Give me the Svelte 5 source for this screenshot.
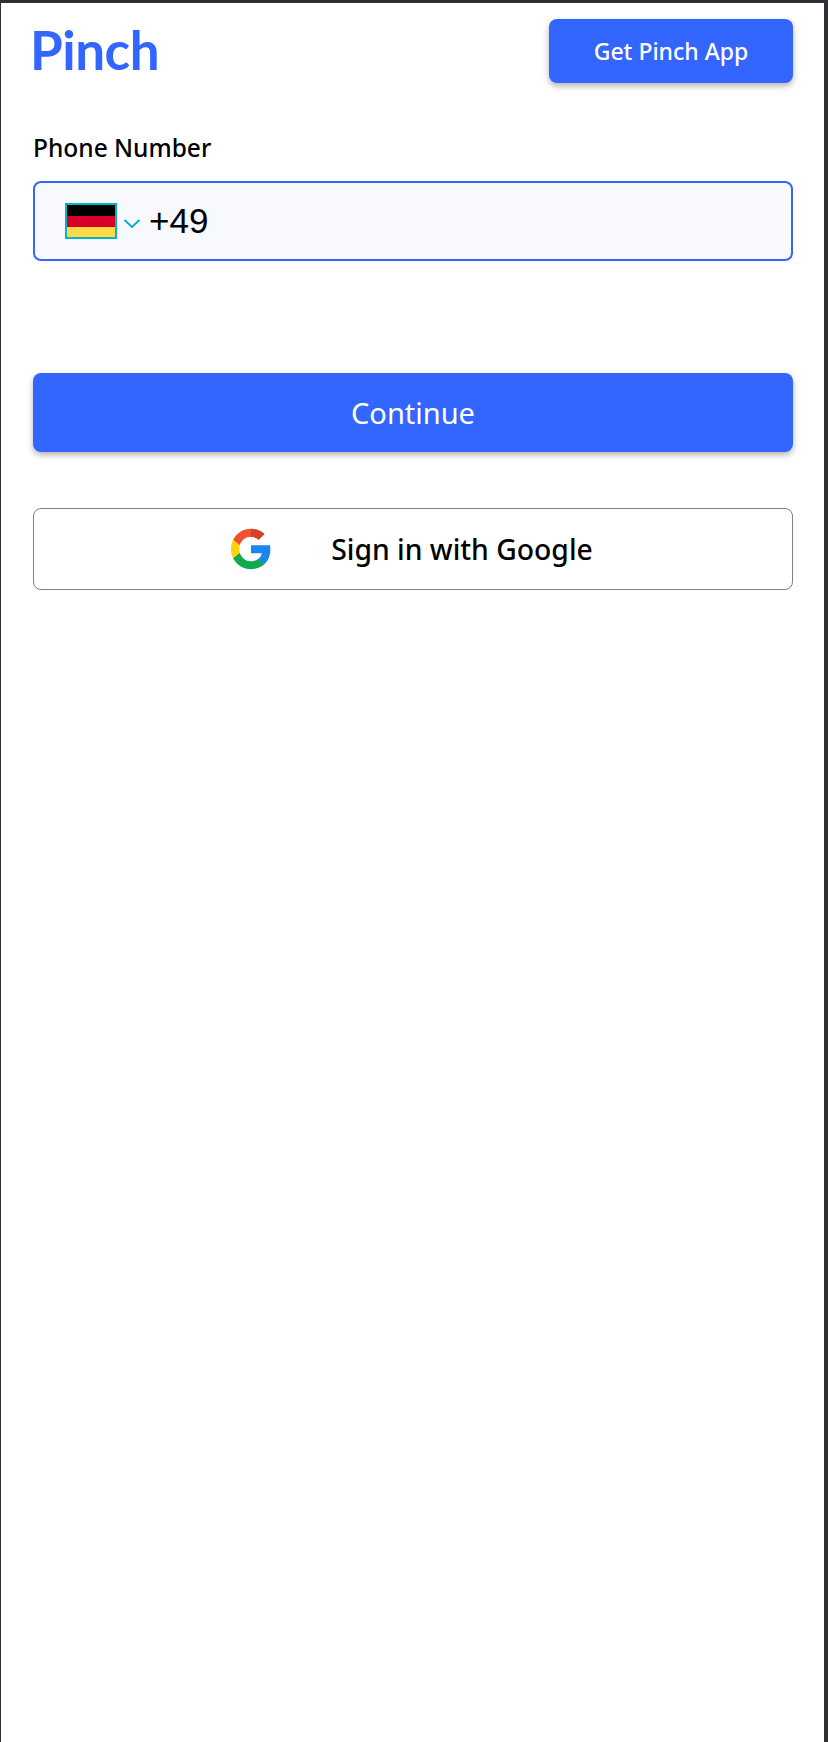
<script>
  let phone = $state("+49");
</script>

<div class="frame">
  <header class="top">
    <span class="logo">Pinch</span>
    <button class="btn app">Get Pinch App</button>
  </header>

  <main class="form">
    <label class="label" for="phone">Phone Number</label>
    <div class="phone-box">
      <svg class="flag" viewBox="0 0 52 36" width="52" height="36">
        <rect width="52" height="36" fill="#00b4d0" />
        <rect x="2" y="2" width="48" height="11" fill="#000" />
        <rect x="2" y="13" width="48" height="11" fill="#d80027" />
        <rect x="2" y="24" width="48" height="10" fill="#ffda44" />
      </svg>
      <svg class="chev" viewBox="0 0 18 12" width="18" height="12">
        <path d="M1.5 3 L9 10 L16.500 3" fill="none" stroke="#00b4d0" stroke-width="2" />
      </svg>
      <input id="phone" class="phone" bind:value={phone} />
    </div>

    <button class="btn continue">Continue</button>

    <button class="google">
      <svg class="g" viewBox="0 0 48 48" width="44" height="44">
        <path fill="#1a87f0" d="M45.1 24.5c0-1.6-.1-3.1-.4-4.5H24v8.5h11.8c-.5 2.800-2 5.100-4.400 6.700v5.500h7.100c4.200-3.800 6.600-9.500 6.600-16.200z" />
        <path fill="#12a84e" d="M24 46c5.900 0 10.900-2 14.500-5.300l-7.100-5.500c-2 1.300-4.500 2.100-7.400 2.100-5.700 0-10.500-3.800-12.200-9H4.500v5.700C8.100 41 15.500 46 24 46z" />
        <path fill="#ffd30a" d="M11.800 28.300c-.4-1.300-.7-2.800-.7-4.300s.3-3 .7-4.300V14H4.500C3 17 2.100 20.400 2.100 24s.9 7 2.400 10l7.300-5.700z" />
        <path fill="#f2502c" d="M24 10.700c3.200 0 6.100 1.100 8.400 3.300l6.300-6.300C34.900 4.200 29.900 2 24 2 15.500 2 8.100 7 4.500 14l7.300 5.700c1.700-5.200 6.500-9 12.200-9z" />
        <path fill="#d0422a" d="M24 2v8.700c3.200 0 6.100 1.100 8.400 3.300l6.300-6.300C34.900 4.200 29.900 2 24 2z" />
      </svg>
      <span>Sign in with Google</span>
    </button>
  </main>
</div>

<style>
  :global(body) {
    margin: 0;
    background: #fff;
  }

  .frame {
    box-sizing: border-box;
    width: 828px;
    height: 1742px;
    border-top: 3px solid #2f3034;
    border-left: 1px solid #2f3034;
    border-right: 4px solid #2f3034;
    background: #fff;
    font-family: "Noto Sans", "Open Sans", sans-serif;
    overflow: hidden;
  }

  .top {
    display: flex;
    justify-content: space-between;
    align-items: flex-start;
    padding: 16px 31px 0 32px;
  }

  .logo {
    font-family: Lato, sans-serif;
    font-weight: 700;
    font-size: 53px;
    line-height: 62px;
    color: #3366ff;
    letter-spacing: -0.5px;
    margin-left: -3px;
  }

  .btn {
    border: none;
    border-radius: 8px;
    background: #3366ff;
    color: #fff;
    font-family: inherit;
    box-shadow: 0 3px 6px rgba(0, 0, 0, 0.3);
    padding: 0;
  }

  .app {
    width: 244px;
    height: 64px;
    font-size: 23px;
    font-weight: 500;
  }

  .form {
    display: flex;
    flex-direction: column;
    padding: 0 31px 0 32px;
    margin-top: 49px;
  }

  .label {
    font-size: 24.5px;
    font-weight: 500;
    line-height: 32px;
    color: #000;
    margin-bottom: 17px;
  }

  .phone-box {
    box-sizing: border-box;
    display: flex;
    align-items: center;
    height: 80px;
    border: 2px solid #3366ff;
    border-radius: 8px;
    background: #f7f9fc;
    padding-left: 30px;
  }

  .flag {
    flex: none;
  }

  .chev {
    flex: none;
    margin-left: 6px;
    margin-top: 4px;
  }

  .phone {
    flex: 1;
    min-width: 0;
    border: none;
    outline: none;
    background: transparent;
    padding: 0;
    margin-left: 8px;
    font-family: "Liberation Sans", Arial, sans-serif;
    font-size: 35px;
    color: #000;
  }

  .continue {
    height: 79px;
    margin-top: 112px;
    font-size: 29px;
    font-weight: 400;
  }

  .google {
    box-sizing: border-box;
    display: flex;
    align-items: center;
    justify-content: center;
    gap: 58px;
    height: 82px;
    margin-top: 56px;
    border: 1px solid #808080;
    border-radius: 8px;
    background: #fff;
    padding: 0 4px 0 0;
    font-family: inherit;
    font-size: 28.3px;
    font-weight: 500;
    color: #000;
  }

  .g {
    flex: none;
  }
</style>
